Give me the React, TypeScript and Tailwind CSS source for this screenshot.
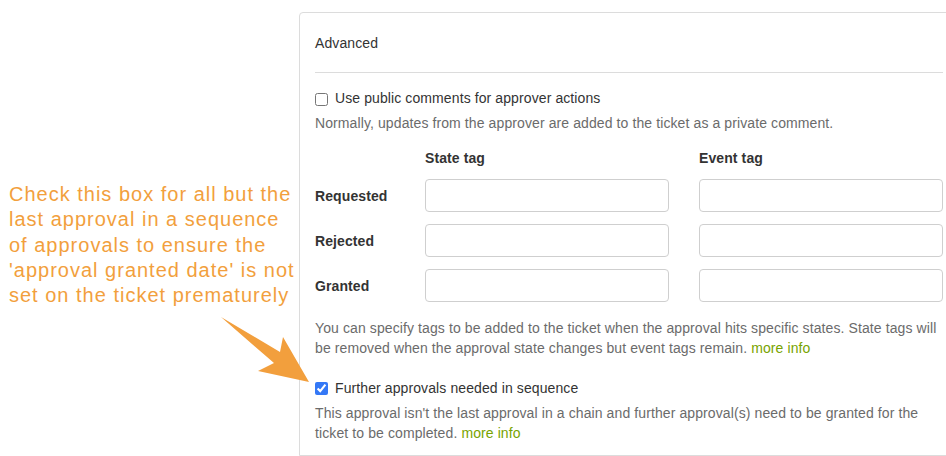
import React from 'react';

const tagRows = ['Requested', 'Rejected', 'Granted'];

const MoreInfo = () => <a className="text-[#78a300]">more info</a>;

const App: React.FC = () => {
  return (
    <div className="relative flex w-[946px] h-[456px] overflow-hidden bg-white font-['Liberation_Sans',Arial,sans-serif]">
      <div className="w-[299px] shrink-0 pl-[9px] pt-[182px] text-[20px] leading-[25.3px] tracking-[1px] text-[#f29f3d] whitespace-nowrap">
        <div>Check this box for all but the</div>
        <div>last approval in a sequence</div>
        <div>of approvals to ensure the</div>
        <div>'approval granted date' is not</div>
        <div>set on the ticket prematurely</div>
      </div>

      <div className="mt-[12px] w-[660px] shrink-0 border border-[#dcdcdc] rounded-tl-[4px] px-[15px] text-[14px] leading-5 tracking-[0.1px] text-[#333]">
        <div className="pt-[20px] pb-[19px] border-b border-[#dcdcdc]">Advanced</div>

        <label className="mt-[15px] flex items-start gap-[7px]">
          <input type="checkbox" className="m-0 mt-[5px] w-[13px] h-[13px]" />
          <span>Use public comments for approver actions</span>
        </label>
        <p className="mt-[5px] text-[#6b6b6b]">Normally, updates from the approver are added to the ticket as a private comment.</p>

        <div className="mt-[15px] grid grid-cols-[80px_244px_244px] gap-x-[30px] gap-y-[12px] items-center">
          <div />
          <div className="font-bold -mb-[1px]">State tag</div>
          <div className="font-bold -mb-[1px]">Event tag</div>
          {tagRows.map(row => (
            <React.Fragment key={row}>
              <div className="font-bold">{row}</div>
              <input className="h-[33px] border border-[#cfcfcf] rounded-[4px] px-2" />
              <input className="h-[33px] border border-[#cfcfcf] rounded-[4px] px-2" />
            </React.Fragment>
          ))}
        </div>

        <p className="mt-[16px] text-[#6b6b6b]">
          You can specify tags to be added to the ticket when the approval hits specific states. State tags will be removed when the approval state changes but event tags remain. <MoreInfo />
        </p>

        <label className="mt-[20px] flex items-start gap-[7px]">
          <input type="checkbox" defaultChecked className="m-0 mt-[4px] w-[13px] h-[13px] accent-[#3478f6]" />
          <span>Further approvals needed in sequence</span>
        </label>
        <p className="mt-[5px] text-[#6b6b6b]">
          This approval isn't the last approval in a chain and further approval(s) need to be granted for the ticket to be completed. <MoreInfo />
        </p>
      </div>

      <svg className="absolute left-0 top-0 pointer-events-none" width="946" height="456" viewBox="0 0 946 456">
        <polygon points="221,317 280,352 283,337 309,382 258,371 274,363" fill="#f29f3d" />
      </svg>
    </div>
  );
};

export default App;
